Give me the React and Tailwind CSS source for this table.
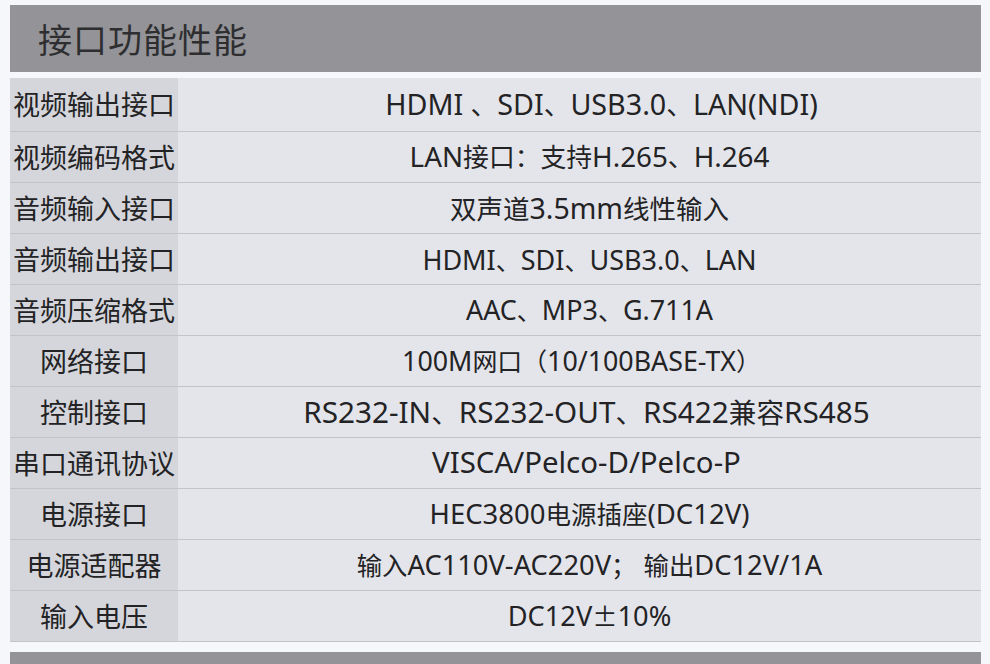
import React from "react";

const rows = [
  ["视频输出接口", "HDMI 、SDI、USB3.0、LAN(NDI)", "text-[26.7px]", "text-[28.7px]", "ml-[24px]"],
  ["视频编码格式", "LAN接口：支持H.265、H.264", "text-[25.8px]", "text-[27.8px]", ""],
  ["音频输入接口", "双声道3.5mm线性输入", "text-[26.5px]", "text-[28.5px]", ""],
  ["音频输出接口", "HDMI、SDI、USB3.0、LAN", "text-[25px]", "text-[27px]", ""],
  ["音频压缩格式", "AAC、MP3、G.711A", "text-[25px]", "text-[26.9px]", ""],
  ["网络接口", "100M网口（10/100BASE-TX）", "text-[24.9px]", "text-[26.8px]", "mr-[16px]"],
  ["控制接口", "RS232-IN、RS232-OUT、RS422兼容RS485", "text-[27.6px]", "text-[29.7px]", "mr-[6px]"],
  ["串口通讯协议", "VISCA/Pelco-D/Pelco-P", "text-[27.4px]", "text-[29.4px]", "mr-[6px]"],
  ["电源接口", "HEC3800电源插座(DC12V)", "text-[25.5px]", "text-[27.5px]", ""],
  ["电源适配器", "输入AC110V-AC220V； 输出DC12V/1A", "text-[25.4px]", "text-[27.3px]", ""],
  ["输入电压", "DC12V±10%", "text-[25.3px]", "text-[27.2px]", ""],
];

const CJK = /([\u3000-\u303f\u4e00-\u9fff\uff00-\uffef±]+)/;

function Value({ text, cjk, latin, shift }) {
  const parts = text.split(CJK).filter((p) => p.length > 0);
  return (
    <div className={"whitespace-nowrap leading-none " + shift}>
      {parts.map((p, i) =>
        CJK.test(p) ? (
          <span
            key={i}
            className={cjk}
            style={{ fontFamily: '"Noto Sans CJK SC", sans-serif' }}
          >
            {p}
          </span>
        ) : (
          <span
            key={i}
            className={latin}
            style={{ fontFamily: '"Noto Sans", "Noto Sans CJK SC", sans-serif' }}
          >
            {p}
          </span>
        )
      )}
    </div>
  );
}

export default function App() {
  return (
    <div
      className="w-[990px] h-[664px] overflow-hidden bg-[#f6f7fb] pt-[5px] pl-[10px]"
      style={{ fontFamily: '"Noto Sans CJK SC", sans-serif' }}
    >
      <div className="w-[971px]">
        <div className="h-[67px] bg-[#939398] flex items-center pl-[28px]">
          <span className="text-[34px] text-[#2e2e30] leading-none tracking-[1px]">
            接口功能性能
          </span>
        </div>
        {rows.map(([k, v, cjk, latin, shift], i) => (
          <div
            key={i}
            className={
              "flex border-b border-[#c3c4c8] " +
              (i === 0 ? "h-[60px] pt-[6px]" : "h-[51px]")
            }
          >
            <div className="w-[168px] bg-[#d5d6db] flex items-center justify-center text-[27px] text-[#232325] whitespace-nowrap">
              {k}
            </div>
            <div className="flex-1 bg-[#e4e5ea] flex items-center justify-center pl-[20px] text-[#232325]">
              <Value text={v} cjk={cjk} latin={latin} shift={shift} />
            </div>
          </div>
        ))}
        <div className="h-[10px]" />
        <div className="h-[20px] bg-[#939398]" />
      </div>
    </div>
  );
}
